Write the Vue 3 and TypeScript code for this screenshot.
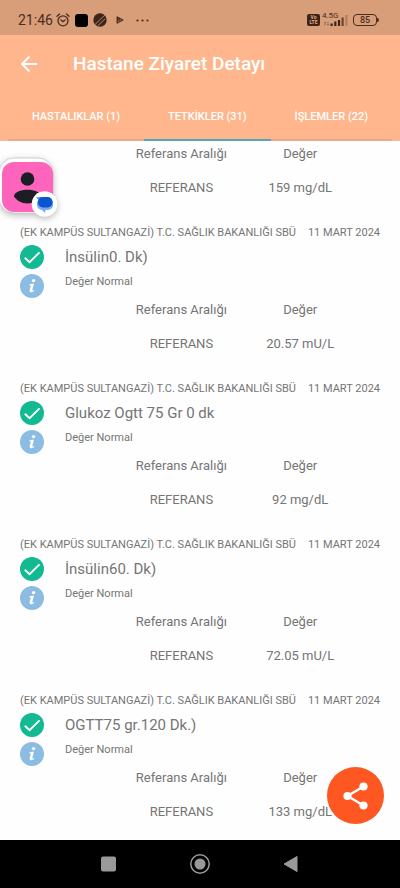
<script setup lang="ts">
import { ref } from 'vue'

interface Tab {
  id: string
  label: string
}

interface Result {
  id: number
  name: string
  value: string
}

const tabs: Tab[] = [
  { id: 'hastaliklar', label: 'HASTALIKLAR (1)' },
  { id: 'tetkikler', label: 'TETKİKLER (31)' },
  { id: 'islemler', label: 'İŞLEMLER (22)' },
]
const activeTab = ref('tetkikler')

const hospital = '(EK KAMPÜS SULTANGAZİ) T.C. SAĞLIK BAKANLIĞI SBÜ'
const visitDate = '11 MART 2024'

// An entry without a name is the tail of a record scrolled under the header.
const results: Result[] = [
  { id: 1, name: '', value: '159 mg/dL' },
  { id: 2, name: 'İnsülin0. Dk)', value: '20.57 mU/L' },
  { id: 3, name: 'Glukoz Ogtt 75 Gr 0 dk', value: '92 mg/dL' },
  { id: 4, name: 'İnsülin60. Dk)', value: '72.05 mU/L' },
  { id: 5, name: 'OGTT75 gr.120 Dk.)', value: '133 mg/dL' },
]
</script>

<template>
  <div class="screen">
    <div class="status">
      <div class="status-group">
        <span class="clock">21:46</span>
        <svg class="alarm" viewBox="0 0 14 14" width="14" height="14" fill="none" stroke="#4b2d1c" stroke-width="1.3" stroke-linecap="round">
          <circle cx="7" cy="7.8" r="5" />
          <path d="M1 3.2 3.5 1M13 3.2 10.5 1M4.9 7l2.1 1.6L9.1 7" />
        </svg>
        <svg viewBox="0 0 13 13" width="13" height="13"><rect width="13" height="13" rx="3" fill="#000" /></svg>
        <svg viewBox="0 0 14 14" width="14" height="14">
          <circle cx="7" cy="7" r="6.7" fill="#3c2619" />
          <path d="M2 11.5 12.5 1.5M5 12.5l7-6.5" stroke="#c98f6c" stroke-width=".9" />
        </svg>
        <svg class="play" viewBox="0 0 8 8" width="8" height="8" fill="none" stroke="#4b2d1c" stroke-width="1.3" stroke-linejoin="round">
          <path d="M1.2 1 6.8 4 1.2 7ZM1.2 4h3" />
        </svg>
        <svg class="dots" viewBox="0 0 13 3" width="13" height="3" fill="#4b2d1c">
          <circle cx="1.5" cy="1.5" r="1.1" /><circle cx="6.5" cy="1.5" r="1.1" /><circle cx="11.5" cy="1.5" r="1.1" />
        </svg>
      </div>
      <div class="status-group status-right">
        <span class="volte"><span>Vo</span><span>LTE</span></span>
        <span class="signal">
          <span class="network">4.5G</span>
          <svg viewBox="0 0 25 11" width="25" height="11">
            <path d="M2 7v3.5M1 8l1-1.2L3 8M5 6.5V10M4 9l1 1.2L6 9" fill="none" stroke="#8c6047" stroke-width=".7" />
            <path d="M7.500 8.500h2.200V11H7.500zM11.200 6.500h2.200V11h-2.200zM14.900 5h2.200v6h-2.200z" fill="#3c2416" />
            <path d="M18.500 2.500h2.200V11h-2.200z" fill="#6b452e" />
            <path d="M22.300 0h2.200v11h-2.200z" fill="#b07f61" />
          </svg>
        </span>
        <span class="battery">85</span>
      </div>
    </div>

    <header class="header">
      <div class="toolbar">
        <button class="back" type="button" aria-label="Geri">
          <svg viewBox="0 0 18 18" width="18" height="18" fill="none" stroke="#fff" stroke-width="2">
            <path d="M17 9H2M9.500 1.500 2 9l7.500 7.500" />
          </svg>
        </button>
        <h1>Hastane Ziyaret Detayı</h1>
      </div>
      <nav class="tabs">
        <button
          v-for="tab in tabs"
          :key="tab.id"
          type="button"
          class="tab"
          :class="{ active: tab.id === activeTab }"
          @click="activeTab = tab.id"
        >{{ tab.label }}</button>
      </nav>
    </header>

    <main class="content">
      <div class="list">
        <article v-for="item in results" :key="item.id" class="record">
          <template v-if="item.name">
            <div class="record-head">
              <span>{{ hospital }}</span>
              <span>{{ visitDate }}</span>
            </div>
            <div class="record-body">
              <div class="marks">
                <svg viewBox="0 0 24 24" width="24" height="24">
                  <circle cx="12" cy="12" r="12" fill="#12b991" />
                  <path d="M4.800 12.700 9.600 17.200 19.500 7.300" fill="none" stroke="#fff" stroke-width="1.900" />
                </svg>
                <svg viewBox="0 0 24 24" width="24" height="24">
                  <circle cx="12" cy="12" r="12" fill="#8cbce1" />
                  <circle cx="13.600" cy="6.600" r="1.700" fill="#fff" />
                  <path d="M9.500 10.200 13.900 9.600 12.300 15.900Q12 17.200 14.300 16L14 17.200Q9.300 19.600 9.600 16.400L10.800 11.500 9.300 11.200Z" fill="#fff" />
                </svg>
              </div>
              <div class="texts">
                <h2>{{ item.name }}</h2>
                <p>Değer Normal</p>
              </div>
            </div>
          </template>
          <table class="values">
            <thead>
              <tr><th scope="col">Referans Aralığı</th><th scope="col">Değer</th></tr>
            </thead>
            <tbody>
              <tr><td>REFERANS</td><td>{{ item.value }}</td></tr>
            </tbody>
          </table>
        </article>
      </div>

      <button class="bubble" type="button" aria-label="Sohbet">
        <svg viewBox="0 0 58 62" width="58" height="62">
          <rect x="-1" y="1" width="54" height="55" rx="15" fill="#fff" stroke="#c9c5c7" stroke-width=".8" />
          <rect x="2" y="5" width="51" height="50" rx="12" fill="#ff64bd" />
          <circle cx="27.500" cy="22" r="6.800" fill="#1d1d25" />
          <path d="M14 39.500C14 30.500 41 30.500 41 39.500 38 43.500 34 46.500 27.500 46.500S17 43.500 14 39.500Z" fill="#1d1d25" />
          <circle cx="44.500" cy="47" r="12.800" fill="#fff" />
          <path d="M40 43h10a3 3 0 0 1 3 3v2a5 5 0 0 1-5 5h-2.500l-.5 3-3-3a5 5 0 0 1-5-5v-2a3 3 0 0 1 3-3Z" fill="#7aa9f6" />
          <path d="M36 40h6v4h-3Z" fill="#659cf5" />
          <rect x="38" y="40" width="14.500" height="10.500" rx="4.800" fill="#0b55d0" />
        </svg>
      </button>

      <button class="share" type="button" aria-label="Paylaş">
        <svg viewBox="0 0 26 28" width="26" height="28" fill="#fff">
          <path d="M20.500 4.500 4.500 14 20.500 23.500" fill="none" stroke="#fff" stroke-width="2.400" />
          <circle cx="20.500" cy="4.500" r="4.100" /><circle cx="4.500" cy="14" r="4.100" /><circle cx="20.500" cy="23.500" r="4.100" />
        </svg>
      </button>
    </main>

    <footer class="system-nav">
      <button type="button" aria-label="Son uygulamalar">
        <svg viewBox="0 0 20 20" width="20" height="20"><rect x="2" y="2.500" width="15" height="15" rx="2" fill="#999" /></svg>
      </button>
      <button type="button" aria-label="Ana ekran">
        <svg viewBox="0 0 20 20" width="20" height="20">
          <circle cx="10" cy="10" r="9.200" fill="none" stroke="#999" stroke-width="1.500" /><circle cx="10" cy="10" r="5.500" fill="#999" />
        </svg>
      </button>
      <button type="button" aria-label="Geri dön">
        <svg viewBox="0 0 20 20" width="20" height="20"><path d="M3 10 16 2.500v15Z" fill="#999" stroke="#999" stroke-linejoin="round" /></svg>
      </button>
    </footer>
  </div>
</template>

<style>
body {
  margin: 0;
}
</style>

<style scoped>
.screen {
  display: flex;
  flex-direction: column;
  height: 100vh;
  background: #fefefe;
  color: #757575;
  font-family: Roboto, "Noto Sans", sans-serif;
}

button {
  margin: 0;
  padding: 0;
  border: 0;
  background: none;
  font: inherit;
  color: inherit;
}

svg {
  display: block;
  flex-shrink: 0;
}

.status {
  display: flex;
  justify-content: space-between;
  align-items: center;
  box-sizing: border-box;
  height: 35px;
  padding: 5px 23px 0 18px;
  background: #d89d79;
  color: #4b2d1c;
}

.status-group {
  display: flex;
  align-items: center;
  gap: 5px;
}

.clock {
  font-size: 14px;
  line-height: 20px;
}

.alarm {
  margin-left: -2px;
}

.play {
  margin-left: 4px;
}

.dots {
  margin-left: 7px;
}

.status-right {
  gap: 3px;
}

.volte {
  display: flex;
  flex-direction: column;
  align-items: center;
  justify-content: center;
  width: 13px;
  height: 12px;
  border-radius: 2px;
  background: #3c2416;
  color: #e3ab88;
  font-size: 5px;
  font-weight: 700;
  line-height: 5px;
}

.signal {
  position: relative;
  margin-right: 2px;
}

.network {
  position: absolute;
  top: -3px;
  left: -1px;
  font-size: 8px;
  line-height: 8px;
}

.battery {
  position: relative;
  box-sizing: border-box;
  width: 24px;
  height: 12px;
  border: 1px solid #4b2d1c;
  border-radius: 4px;
  font-size: 9px;
  font-weight: 500;
  line-height: 10px;
  text-align: center;
}

.battery::after {
  content: "";
  position: absolute;
  top: 3px;
  right: -3px;
  width: 2px;
  height: 4px;
  border-radius: 0 2px 2px 0;
  background: #4b2d1c;
}

.header {
  position: relative;
  z-index: 1;
  background: #ffb68c;
  color: #fff;
}

.toolbar {
  display: flex;
  align-items: center;
  gap: 35px;
  height: 57px;
  padding: 0 20px;
}

h1 {
  margin: 0;
  font-size: 19px;
  font-weight: 500;
  line-height: 24px;
}

.tabs {
  display: flex;
  height: 49px;
  padding: 0 8px;
}

.tab {
  flex: 1 1 auto;
  box-sizing: border-box;
  padding-top: 3px;
  border-bottom: 2px solid #e5aa88;
  font-size: 11px;
  font-weight: 500;
  line-height: 16px;
}

.tab.active {
  border-color: #55a6bb;
}

.content {
  position: relative;
  flex: 1;
  min-height: 0;
}

.list {
  height: 100%;
  overflow: hidden;
}

.record {
  padding: 0 20px 18px;
}

.record:first-child {
  margin-top: -4px;
}

.record-head {
  display: flex;
  justify-content: space-between;
  font-size: 11px;
  line-height: 20px;
  white-space: nowrap;
}

.record-body {
  display: flex;
  gap: 21px;
  height: 50px;
}

.marks {
  display: flex;
  flex-direction: column;
  gap: 5px;
  padding-top: 2px;
}

h2 {
  margin: 0;
  padding-top: 2px;
  font-size: 15px;
  font-weight: 400;
  line-height: 24px;
}

p {
  margin: 0;
  padding-top: 5px;
  font-size: 11px;
  line-height: 16px;
}

.values {
  width: 66%;
  margin: 0 auto 0 102px;
  border-collapse: collapse;
  table-layout: fixed;
  font-size: 13px;
  line-height: 20px;
  text-align: center;
}

.values th,
.values td {
  height: 34px;
  padding: 0;
  font-weight: 400;
}

.bubble {
  position: absolute;
  top: 16px;
  left: 0;
  filter: drop-shadow(0 2px 3px #0004);
}

.share {
  position: absolute;
  right: 16px;
  bottom: 16px;
  display: grid;
  place-items: center;
  width: 57px;
  height: 57px;
  border-radius: 50%;
  background: #ff5722;
}

.system-nav {
  display: flex;
  justify-content: center;
  align-items: center;
  gap: 71px;
  height: 48px;
  background: #000;
}
</style>
